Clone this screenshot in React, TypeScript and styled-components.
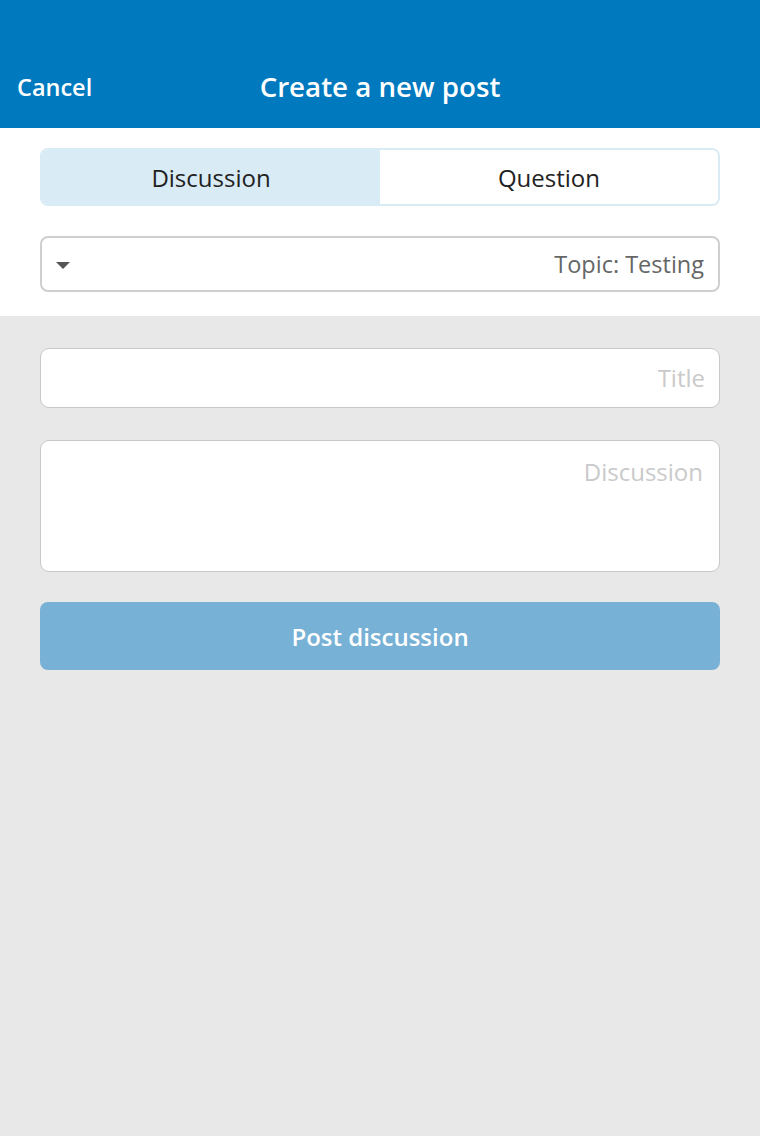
import React from "react";
import styled, { createGlobalStyle } from "styled-components";

const Global = createGlobalStyle`
  html, body { margin: 0; padding: 0; background: #e8e8e8; }
  body { font-family: "Open Sans", "Noto Sans", sans-serif; }
  * { box-sizing: border-box; }
`;

const Page = styled.div`
  min-height: 1136px;
  background: #e8e8e8;
  display: flex;
  flex-direction: column;
`;

const Header = styled.header`
  height: 128px;
  background: #0079be;
  color: #fff;
  position: relative;
  display: flex;
  align-items: flex-end;
  padding-bottom: 22px;
`;

const CancelButton = styled.button`
  background: none;
  border: none;
  color: #fff;
  font-family: inherit;
  font-size: 23.5px;
  font-weight: 600;
  padding: 0 0 0 17px;
  line-height: 38px;
  cursor: pointer;
  position: relative;
  z-index: 1;
`;

const HeaderTitle = styled.h1`
  position: absolute;
  left: 0;
  right: 0;
  bottom: 23px;
  margin: 0;
  text-align: center;
  font-size: 27.7px;
  font-weight: 600;
  line-height: 38px;
`;

const TopSection = styled.section`
  background: #fff;
  padding: 20px 40px 24px;
  display: flex;
  flex-direction: column;
  gap: 30px;
`;

const Segmented = styled.div`
  display: flex;
  height: 58px;
  border: 2px solid #d9ebf5;
  border-radius: 8px;
  overflow: hidden;
`;

const Segment = styled.button<{ $active?: boolean }>`
  flex: 1;
  border: none;
  background: ${(p) => (p.$active ? "#d9ebf5" : "#fff")};
  font-family: inherit;
  font-size: 24px;
  color: #222;
  padding: 0;
  cursor: pointer;
`;

const Select = styled.div`
  height: 56px;
  border: 2px solid #cfcfcf;
  border-radius: 8px;
  display: flex;
  align-items: center;
  justify-content: space-between;
  padding: 0 14px 0 14px;
`;

const Caret = styled.span`
  width: 0;
  height: 0;
  border-left: 7px solid transparent;
  border-right: 7px solid transparent;
  border-top: 7px solid #555;
  margin-top: 2px;
`;

const SelectValue = styled.span`
  font-size: 23.5px;
  color: #666;
`;

const Form = styled.section`
  padding: 32px 40px;
  display: flex;
  flex-direction: column;
  gap: 32px;
`;

const Field = styled.div<{ $tall?: boolean }>`
  height: ${(p) => (p.$tall ? "132px" : "60px")};
  background: #fff;
  border: 1.5px solid #c8c8c8;
  border-radius: 9px;
  display: flex;
  justify-content: flex-end;
  align-items: ${(p) => (p.$tall ? "flex-start" : "center")};
  padding: ${(p) => (p.$tall ? "15px 16px" : "0 14px 0 16px")};
`;

const Placeholder = styled.span`
  font-size: 24px;
  color: #cacaca;
  line-height: 32px;
`;

const PostButton = styled.button`
  height: 68px;
  margin-top: -2px;
  border: none;
  border-radius: 8px;
  background: #77b1d5;
  color: #fff;
  font-family: inherit;
  font-size: 24px;
  font-weight: 600;
  cursor: pointer;
`;

export default function App() {
  return (
    <>
      <Global />
      <Page>
        <Header>
          <CancelButton>Cancel</CancelButton>
          <HeaderTitle>Create a new post</HeaderTitle>
        </Header>
        <TopSection>
          <Segmented>
            <Segment $active>Discussion</Segment>
            <Segment>Question</Segment>
          </Segmented>
          <Select>
            <Caret />
            <SelectValue>Topic: Testing</SelectValue>
          </Select>
        </TopSection>
        <Form>
          <Field>
            <Placeholder>Title</Placeholder>
          </Field>
          <Field $tall>
            <Placeholder>Discussion</Placeholder>
          </Field>
          <PostButton>Post discussion</PostButton>
        </Form>
      </Page>
    </>
  );
}
